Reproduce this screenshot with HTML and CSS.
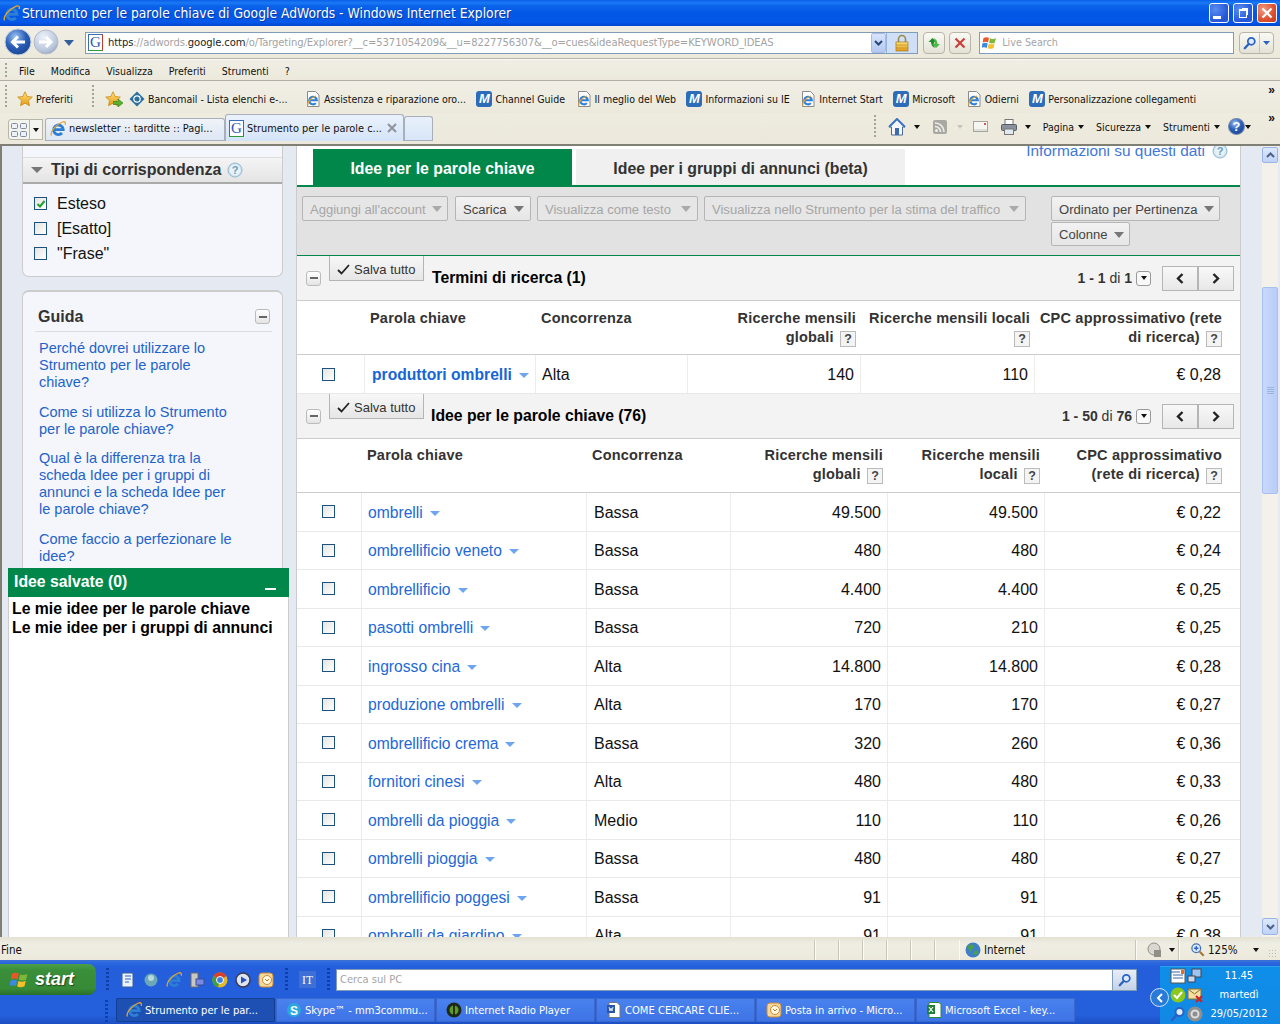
FILE: index.html
```html
<!DOCTYPE html>
<html lang="it">
<head>
<meta charset="utf-8">
<title>Strumento per le parole chiave di Google AdWords - Windows Internet Explorer</title>
<link rel="stylesheet" href="styles.css">
</head>
<body>
<svg class="defs" width="0" height="0" aria-hidden="true">
  <defs>
    <linearGradient id="gold" x1="0" y1="0" x2="0" y2="1"><stop offset="0" stop-color="#ffe27a"/><stop offset="1" stop-color="#e39a14"/></linearGradient>
    <radialGradient id="blueball" cx=".4" cy=".3" r=".8"><stop offset="0" stop-color="#9fc4f2"/><stop offset=".5" stop-color="#2a5fb8"/><stop offset="1" stop-color="#173f8c"/></radialGradient>
    <radialGradient id="greyball" cx=".4" cy=".3" r=".8"><stop offset="0" stop-color="#eef3fa"/><stop offset=".7" stop-color="#b9c6dc"/><stop offset="1" stop-color="#8c9cb8"/></radialGradient>
    <symbol id="ie" viewBox="0 0 16 16">
      <path d="M4 8.600h9.200a4.800 4.800 0 1 0-1.200 3.400" fill="none" stroke="#2d7fd6" stroke-width="2.800"/>
      <path d="M1.500 14.500C-.5 11 6 3.500 12.500 1c2.500-.8 3.500.8 2.600 2.800" fill="none" stroke="#e8a52c" stroke-width="1.300"/>
    </symbol>
    <symbol id="iepage" viewBox="0 0 16 16">
      <path d="M2.500.5h8l3.500 3.500v11.500h-11.500z" fill="#fbfbfb" stroke="#8a8a8a"/>
      <path d="M4.800 9.300h7a3.800 3.800 0 1 0-1 2.800" fill="none" stroke="#2d7fd6" stroke-width="2.100"/>
      <path d="M3 14.500c-1-3 3-8 8-9.500" fill="none" stroke="#e8a52c" stroke-width="1.100"/>
    </symbol>
    <symbol id="star" viewBox="0 0 16 16">
      <path d="M8 .8l2.200 4.700 5.100.6-3.800 3.500 1 5.100L8 12.200l-4.500 2.500 1-5.100L.7 6.100l5.100-.6z" fill="url(#gold)" stroke="#c98a1a" stroke-width=".8"/>
    </symbol>
    <symbol id="flag" viewBox="0 0 16 16">
      <path d="M1.500 3c2-1.200 3.800-1 5.500 0l-1 4.500C4.300 6.600 2.500 6.500.6 7.500z" fill="#e8562a"/>
      <path d="M8 3.300c1.700 1 3.700 1 5.900-.2l-1 4.500c-2 1.100-3.900 1.100-5.800.2z" fill="#7db83a"/>
      <path d="M.4 8.500c1.900-1 3.600-.9 5.300 0l-1 4.500C3 12.100 1.300 12 -.5 13z" fill="#3a8ae0"/>
      <path d="M6.700 8.700c1.900.9 3.800.9 5.900-.2l-1 4.500c-2 1.100-3.900 1.100-5.900.2z" fill="#f5c02a"/>
    </symbol>
    <symbol id="magnifier" viewBox="0 0 16 16">
      <circle cx="9.500" cy="6" r="4" fill="#dcebff" stroke="#2a62c4" stroke-width="2"/>
      <path d="M6.500 9.200L2 14" stroke="#2a62c4" stroke-width="2.600" stroke-linecap="round"/>
    </symbol>
    <symbol id="bighelp" viewBox="0 0 16 16">
      <circle cx="8" cy="8" r="7" fill="#cfe3ee" stroke="#8fb8d2"/>
      <circle cx="8" cy="8" r="5.400" fill="#e8f2f7"/>
      <text x="8" y="12" text-anchor="middle" class="svg-help">?</text>
    </symbol>
  </defs>
</svg>

<div class="window">
  <header class="titlebar">
    <svg class="title-ico"><use href="#ie"/></svg>
    <span class="title-text">Strumento per le parole chiave di Google AdWords - Windows Internet Explorer</span>
    <div class="winbtns">
      <span class="winbtn"><i class="w-min"></i></span>
      <span class="winbtn"><i class="w-max"></i></span>
      <span class="winbtn winclose"><svg viewBox="0 0 12 12" width="12" height="12"><path d="M1.500 1.500l9 9m0-9l-9 9" stroke="#fff" stroke-width="2.200"/></svg></span>
    </div>
  </header>

  <div class="navbar">
    <svg class="navball" viewBox="0 0 28 28" width="28" height="28"><circle cx="14" cy="14" r="13" fill="url(#blueball)" stroke="#c5d0de"/><path d="M21 14H9m5-5.500L8.500 14l5.500 5.500" fill="none" stroke="#fff" stroke-width="3"/></svg>
    <svg class="navball fwd" viewBox="0 0 26 26" width="26" height="26"><circle cx="13" cy="13" r="12" fill="url(#greyball)" stroke="#b4bccb"/><path d="M6 13h12m-5-5l5 5-5 5" fill="none" stroke="#fff" stroke-width="3"/></svg>
    <svg class="navdrop" viewBox="0 0 10 6" width="10" height="6"><path d="M0 0h10L5 6z" fill="#33609c"/></svg>
    <div class="addr">
      <span class="gicon"><span>G</span></span>
      <span class="url">https<span class="dim">://adwords.</span>google.com<span class="dim">/o/Targeting/Explorer?__c=5371054209&amp;__u=8227756307&amp;__o=cues&amp;ideaRequestType=KEYWORD_IDEAS</span></span>
      <span class="addr-drop"><svg viewBox="0 0 9 6" width="9" height="6"><path d="M1 1l3.500 3.500L8 1" fill="none" stroke="#26477c" stroke-width="2"/></svg></span>
      <span class="addr-lock"><svg viewBox="0 0 14 18" width="14" height="18"><path d="M3.500 8V5a3.500 3.500 0 0 1 7 0v3" fill="none" stroke="#9a8a50" stroke-width="1.600"/><rect x="1" y="8" width="12" height="9" fill="url(#gold)" stroke="#a07820" stroke-width=".7"/><path d="M1 11h12M1 14h12" stroke="#b98a24" stroke-width=".7"/></svg></span>
    </div>
    <span class="navbtn"><svg viewBox="0 0 14 14" width="14" height="14"><path d="M5.500 2L1.500 6h2.500c0 3 1.500 5 4 6-1-1.500-1.500-3.500-1-6h2.500z" fill="#1f8a2c"/><path d="M9 12l4-4h-2.500c0-3-1.500-5-4-6 1 1.500 1.500 3.500 1 6H5z" fill="#4cb848"/></svg></span>
    <span class="navbtn stop"><svg viewBox="0 0 12 12" width="12" height="12"><path d="M1.500 1.500l9 9m0-9l-9 9" stroke="#c8403a" stroke-width="2.200"/></svg></span>
    <div class="search">
      <svg class="ico16"><use href="#flag"/></svg>
      <span class="search-text">Live Search</span>
    </div>
    <span class="searchbtn"><span class="searchgo"><svg class="ico14"><use href="#magnifier"/></svg></span><span class="searchmore"><svg viewBox="0 0 7 4" width="7" height="4"><path d="M0 0h7L3.500 4z" fill="#2a62c4"/></svg></span></span>
  </div>

  <nav class="menubar">
    <span class="grip"></span>
    <span>File</span><span>Modifica</span><span>Visualizza</span><span>Preferiti</span><span>Strumenti</span><span>?</span>
  </nav>

  <div class="favbar">
    <span class="grip"></span>
    <span class="fav fav-main"><svg class="ico16"><use href="#star"/></svg>Preferiti</span>
    <span class="grip grip-mid"></span>
    <span class="fav-add"><svg class="ico16"><use href="#star"/></svg><svg class="fav-arrow" viewBox="0 0 10 8" width="10" height="8"><path d="M0 2.500h5V0l5 4-5 4V5.500H0z" fill="#5bb02c" stroke="#2f7a18" stroke-width=".6"/></svg></span>
    <span class="fav"><svg class="ico16" viewBox="0 0 16 16"><path d="M8 .5L15.500 8 8 15.500.5 8z" fill="#2b6f9c"/><circle cx="8" cy="8" r="3.200" fill="none" stroke="#fff" stroke-width="1.200"/></svg>Bancomail - Lista elenchi e-...</span>
    <span class="fav fav-gap"><svg class="ico16"><use href="#iepage"/></svg>Assistenza e riparazione oro...</span>
    <span class="fav"><span class="mlogo">M</span>Channel Guide</span>
    <span class="fav"><svg class="ico16"><use href="#iepage"/></svg>Il meglio del Web</span>
    <span class="fav"><span class="mlogo">M</span>Informazioni su IE</span>
    <span class="fav"><svg class="ico16"><use href="#iepage"/></svg>Internet Start</span>
    <span class="fav"><span class="mlogo">M</span>Microsoft</span>
    <span class="fav"><svg class="ico16"><use href="#iepage"/></svg>Odierni</span>
    <span class="fav"><span class="mlogo">M</span>Personalizzazione collegamenti</span>
    <span class="chev">»</span>
  </div>

  <div class="tabbar">
    <span class="quicktabs"><svg viewBox="0 0 16 14" width="16" height="14"><g fill="#eef2f8" stroke="#7f8aa0"><rect x=".5" y=".5" width="6" height="5" rx="1"/><rect x="9.500" y=".5" width="6" height="5" rx="1"/><rect x=".5" y="8.500" width="6" height="5" rx="1"/><rect x="9.500" y="8.500" width="6" height="5" rx="1"/></g></svg></span>
    <span class="quickdrop"><i class="tri-k"></i></span>
    <span class="tab"><svg class="ico16"><use href="#ie"/></svg><span class="tab-t">newsletter :: tarditte :: Pagi...</span></span>
    <span class="tab tab-on"><span class="gicon"><span>G</span></span><span class="tab-t">Strumento per le parole c...</span><svg class="tab-x" viewBox="0 0 10 10" width="10" height="10"><path d="M1 1l8 8m0-8l-8 8" stroke="#8f939c" stroke-width="2"/></svg></span>
    <span class="tab tab-new"></span>
    <div class="cmdbar">
      <span class="grip"></span>
      <svg class="cmd-home" viewBox="0 0 18 18" width="18" height="18"><path d="M9 1L1 9h2.500v8h11V9H17z" fill="#f5f7fb" stroke="#4a6d9a"/><path d="M1 9l8-8 8 8" fill="none" stroke="#3a74c0" stroke-width="2"/><rect x="7" y="10" width="4" height="7" fill="#3d6ca8"/></svg>
      <i class="tri-k cmd-a"></i>
      <svg class="cmd-feed" viewBox="0 0 14 14" width="14" height="14"><rect width="14" height="14" rx="2" fill="#a9a9a1"/><circle cx="3.500" cy="10.500" r="1.500" fill="#eee"/><path d="M2 6.500a5.500 5.500 0 0 1 5.500 5.500M2 3a9 9 0 0 1 9 9" fill="none" stroke="#eee" stroke-width="1.500"/></svg>
      <i class="tri-g cmd-b"></i>
      <svg class="cmd-mail" viewBox="0 0 15 11" width="15" height="11"><rect x=".5" y=".5" width="14" height="10" fill="#f5f5f2" stroke="#a5a59d"/><path d="M1 9h13" stroke="#c9c9c2"/><rect x="11" y="2" width="2" height="2" fill="#d05a50"/></svg>
      <svg class="cmd-print" viewBox="0 0 16 16" width="16" height="16"><rect x="4" y=".5" width="8" height="5" fill="#fff" stroke="#777"/><rect x=".5" y="5.500" width="15" height="6" rx="1" fill="#8a919c" stroke="#555c66"/><rect x="3.500" y="10" width="9" height="5.500" fill="#dfeaf5" stroke="#777"/></svg>
      <i class="tri-k cmd-c"></i>
      <span class="cmd-t">Pagina</span><i class="tri-k"></i>
      <span class="cmd-t">Sicurezza</span><i class="tri-k"></i>
      <span class="cmd-t">Strumenti</span><i class="tri-k"></i>
      <svg class="cmd-help" viewBox="0 0 16 16" width="16" height="16"><circle cx="8" cy="8" r="7.500" fill="url(#blueball)" stroke="#7c8cad"/><text x="8" y="12" text-anchor="middle" class="svg-q">?</text></svg>
      <i class="tri-k cmd-d"></i>
      <span class="chev chev-cmd">»</span>
    </div>
  </div>

  <div class="content">
    <aside class="side">
      <section class="panel panel-match">
        <h2 class="match-head"><i class="tri-head"></i>Tipi di corrispondenza<svg class="ico16 head-help"><use href="#bighelp"/></svg></h2>
        <ul class="match-list">
          <li><span class="cb cb-on"><svg viewBox="0 0 10 10" width="10" height="10"><path d="M1.500 5l2.500 2.500 4.500-5.500" fill="none" stroke="#22a030" stroke-width="2"/></svg></span>Esteso</li>
          <li><span class="cb"></span>[Esatto]</li>
          <li><span class="cb"></span>"Frase"</li>
        </ul>
      </section>
      <section class="panel panel-help">
        <h2 class="help-head">Guida<span class="collapse"><i></i></span></h2>
        <a class="help-link">Perché dovrei utilizzare lo Strumento per le parole chiave?</a>
        <a class="help-link">Come si utilizza lo Strumento per le parole chiave?</a>
        <a class="help-link">Qual è la differenza tra la scheda Idee per i gruppi di annunci e la scheda Idee per le parole chiave?</a>
        <a class="help-link">Come faccio a perfezionare le idee?</a>
      </section>
      <div class="saved">
        <div class="saved-head">Idee salvate (0)<i class="saved-min"></i></div>
        <div class="saved-body">Le mie idee per le parole chiave<br>Le mie idee per i gruppi di annunci</div>
      </div>
    </aside>

    <main class="main">
      <div class="tabs">
        <span class="mtab mtab-on">Idee per le parole chiave</span>
        <span class="mtab mtab-off">Idee per i gruppi di annunci (beta)</span>
        <a class="info">Informazioni su questi dati<svg class="ico16"><use href="#bighelp"/></svg></a>
      </div>
      <div class="toolbar">
        <div class="tools-left">
          <span class="tbtn off">Aggiungi all'account<i></i></span>
          <span class="tbtn">Scarica<i></i></span>
          <span class="tbtn off">Visualizza come testo<i></i></span>
          <span class="tbtn off">Visualizza nello Strumento per la stima del traffico<i></i></span>
        </div>
        <div class="tools-right">
          <span class="tbtn">Ordinato per Pertinenza<i></i></span>
          <span class="tbtn tbtn-small">Colonne<i></i></span>
        </div>
      </div>

      <div class="sechead">
        <span class="collapse"><i></i></span>
        <span class="saveall"><svg viewBox="0 0 13 11" width="13" height="11"><path d="M1 6l3.500 3.500L12 1" fill="none" stroke="#222" stroke-width="1.800"/></svg>Salva tutto</span>
        <h3>Termini di ricerca (1)</h3>
        <div class="pager"><span><b>1 - 1</b> di <b>1</b></span><span class="pagedrop"><i class="tri-k"></i></span><span class="pagebtns"><span><svg viewBox="0 0 8 11" width="8" height="11"><path d="M6.500 1L2 5.500 6.500 10" fill="none" stroke="#222" stroke-width="2.400"/></svg></span><span><svg viewBox="0 0 8 11" width="8" height="11"><path d="M1.500 1L6 5.500 1.500 10" fill="none" stroke="#222" stroke-width="2.400"/></svg></span></span></div>
      </div>
      <div class="kw kw-a">
        <div class="r rh">
          <div></div><div class="hc">Parola chiave</div><div class="hc">Concorrenza</div>
          <div class="hc num">Ricerche mensili globali <span class="q">?</span></div>
          <div class="hc num">Ricerche mensili locali <span class="q">?</span></div>
          <div class="hc num">CPC approssimativo (rete di ricerca) <span class="q">?</span></div>
        </div>
        <div class="r rd rd-a">
          <div class="cbc"><span class="cb"></span></div><div class="c"><a class="kwl kwl-b">produttori ombrelli</a><i class="kwa"></i></div><div class="c">Alta</div><div class="c n">140</div><div class="c n">110</div><div class="c n">€ 0,28</div>
        </div>
      </div>

      <div class="sechead sechead-b">
        <span class="collapse"><i></i></span>
        <span class="saveall"><svg viewBox="0 0 13 11" width="13" height="11"><path d="M1 6l3.500 3.500L12 1" fill="none" stroke="#222" stroke-width="1.800"/></svg>Salva tutto</span>
        <h3>Idee per le parole chiave (76)</h3>
        <div class="pager"><span><b>1 - 50</b> di <b>76</b></span><span class="pagedrop"><i class="tri-k"></i></span><span class="pagebtns"><span><svg viewBox="0 0 8 11" width="8" height="11"><path d="M6.500 1L2 5.500 6.500 10" fill="none" stroke="#222" stroke-width="2.400"/></svg></span><span><svg viewBox="0 0 8 11" width="8" height="11"><path d="M1.500 1L6 5.500 1.500 10" fill="none" stroke="#222" stroke-width="2.400"/></svg></span></span></div>
      </div>
      <div class="kw kw-b">
        <div class="r rh">
          <div></div><div class="hc">Parola chiave</div><div class="hc">Concorrenza</div>
          <div class="hc num">Ricerche mensili globali <span class="q">?</span></div>
          <div class="hc num">Ricerche mensili locali <span class="q">?</span></div>
          <div class="hc num">CPC approssimativo (rete di ricerca) <span class="q">?</span></div>
        </div>
        <div class="r rd"><div class="cbc"><span class="cb"></span></div><div class="c"><a class="kwl">ombrelli</a><i class="kwa"></i></div><div class="c">Bassa</div><div class="c n">49.500</div><div class="c n">49.500</div><div class="c n">€ 0,22</div></div>
        <div class="r rd"><div class="cbc"><span class="cb"></span></div><div class="c"><a class="kwl">ombrellificio veneto</a><i class="kwa"></i></div><div class="c">Bassa</div><div class="c n">480</div><div class="c n">480</div><div class="c n">€ 0,24</div></div>
        <div class="r rd"><div class="cbc"><span class="cb"></span></div><div class="c"><a class="kwl">ombrellificio</a><i class="kwa"></i></div><div class="c">Bassa</div><div class="c n">4.400</div><div class="c n">4.400</div><div class="c n">€ 0,25</div></div>
        <div class="r rd"><div class="cbc"><span class="cb"></span></div><div class="c"><a class="kwl">pasotti ombrelli</a><i class="kwa"></i></div><div class="c">Bassa</div><div class="c n">720</div><div class="c n">210</div><div class="c n">€ 0,25</div></div>
        <div class="r rd"><div class="cbc"><span class="cb"></span></div><div class="c"><a class="kwl">ingrosso cina</a><i class="kwa"></i></div><div class="c">Alta</div><div class="c n">14.800</div><div class="c n">14.800</div><div class="c n">€ 0,28</div></div>
        <div class="r rd"><div class="cbc"><span class="cb"></span></div><div class="c"><a class="kwl">produzione ombrelli</a><i class="kwa"></i></div><div class="c">Alta</div><div class="c n">170</div><div class="c n">170</div><div class="c n">€ 0,27</div></div>
        <div class="r rd"><div class="cbc"><span class="cb"></span></div><div class="c"><a class="kwl">ombrellificio crema</a><i class="kwa"></i></div><div class="c">Bassa</div><div class="c n">320</div><div class="c n">260</div><div class="c n">€ 0,36</div></div>
        <div class="r rd"><div class="cbc"><span class="cb"></span></div><div class="c"><a class="kwl">fornitori cinesi</a><i class="kwa"></i></div><div class="c">Alta</div><div class="c n">480</div><div class="c n">480</div><div class="c n">€ 0,33</div></div>
        <div class="r rd"><div class="cbc"><span class="cb"></span></div><div class="c"><a class="kwl">ombrelli da pioggia</a><i class="kwa"></i></div><div class="c">Medio</div><div class="c n">110</div><div class="c n">110</div><div class="c n">€ 0,26</div></div>
        <div class="r rd"><div class="cbc"><span class="cb"></span></div><div class="c"><a class="kwl">ombrelli pioggia</a><i class="kwa"></i></div><div class="c">Bassa</div><div class="c n">480</div><div class="c n">480</div><div class="c n">€ 0,27</div></div>
        <div class="r rd"><div class="cbc"><span class="cb"></span></div><div class="c"><a class="kwl">ombrellificio poggesi</a><i class="kwa"></i></div><div class="c">Bassa</div><div class="c n">91</div><div class="c n">91</div><div class="c n">€ 0,25</div></div>
        <div class="r rd"><div class="cbc"><span class="cb"></span></div><div class="c"><a class="kwl">ombrelli da giardino</a><i class="kwa"></i></div><div class="c">Alta</div><div class="c n">91</div><div class="c n">91</div><div class="c n">€ 0,38</div></div>
      </div>
    </main>
    <div class="gutter"></div>
    <div class="scrollbar">
      <span class="sb-btn"><svg viewBox="0 0 9 6" width="9" height="6"><path d="M1 5l3.500-3.500L8 5" fill="none" stroke="#4d6185" stroke-width="2"/></svg></span>
      <span class="sb-thumb"><i></i></span>
      <span class="sb-btn sb-down"><svg viewBox="0 0 9 6" width="9" height="6"><path d="M1 1l3.500 3.500L8 1" fill="none" stroke="#4d6185" stroke-width="2"/></svg></span>
    </div>
  </div>

  <footer class="status">
    <span class="st-text">Fine</span>
    <div class="st-cells"><i></i><i></i><i></i><i></i><i></i><i></i></div>
    <span class="st-zone"><svg class="ico16" viewBox="0 0 16 16"><circle cx="8" cy="8" r="7.500" fill="#3d7fc8"/><path d="M3 4c2-2 5-2 6 0s-2 2-2 4-2 2-3 0-2-2-1-4zm7 5c2-1 4 0 3 2s-3 3-4 1 0-2 1-3z" fill="#4aa04a"/></svg>Internet</span>
    <span class="st-lock"><svg viewBox="0 0 18 16" width="18" height="16"><circle cx="8" cy="7" r="6" fill="#d8d8d0" stroke="#8f8f88"/><rect x="8" y="8" width="7" height="7" fill="#8f8f88"/></svg><i class="tri-k"></i></span>
    <span class="st-zoom"><svg class="ico14" viewBox="0 0 16 16"><circle cx="6" cy="6" r="5" fill="#dcebff" stroke="#4a72b0" stroke-width="1.500"/><path d="M6 3.500v5M3.500 6h5" stroke="#2a62c4" stroke-width="1.500"/><path d="M10 10l4.500 4.500" stroke="#a8752c" stroke-width="2.400"/></svg>125%<i class="tri-k"></i></span>
    <span class="st-grip"></span>
  </footer>

  <div class="taskbar">
    <div class="task-main">
      <div class="task-top">
        <span class="start"><svg class="start-flag" viewBox="0 0 16 16" width="20" height="20"><use href="#flag"/></svg>start</span>
        <span class="dots"></span>
        <div class="quick">
          <svg class="ico16" viewBox="0 0 16 16"><rect x="2" y="1" width="11" height="14" rx="1" fill="#eaf2fc" stroke="#3b5f9a"/><path d="M5 4h6M5 7h6M5 10h4" stroke="#2a62c4"/></svg>
          <svg class="ico16" viewBox="0 0 16 16"><circle cx="8" cy="8" r="6.500" fill="#6aa8b8"/><circle cx="8" cy="6" r="3" fill="#b7d8de"/></svg>
          <svg class="ico16"><use href="#ie"/></svg>
          <svg class="ico16" viewBox="0 0 16 16"><rect x="2" y="1" width="7" height="14" fill="#c8c8c0" stroke="#6a6a6a"/><rect x="7" y="7" width="8" height="6" fill="#7a8ae0" stroke="#3a4a9a"/></svg>
          <svg class="ico16" viewBox="0 0 16 16"><circle cx="8" cy="8" r="7.500" fill="#e3b82a"/><path d="M8 8L1.500 4A7.500 7.500 0 0 1 14.500 4z" fill="#d8402c"/><path d="M8 8L1.500 4A7.500 7.500 0 0 0 6 15.300z" fill="#3f9f3f"/><circle cx="8" cy="8" r="3.500" fill="#3f7fdc" stroke="#fff"/></svg>
          <svg class="ico16" viewBox="0 0 16 16"><circle cx="8" cy="8" r="7" fill="#dfe5ef" stroke="#3a3a58" stroke-width="1.500"/><path d="M6 4.500l6 3.500-6 3.500z" fill="#2a4fb8"/></svg>
          <svg class="ico16" viewBox="0 0 16 16"><rect x="1" y="1" width="14" height="14" rx="3" fill="#f5d79a" stroke="#c98a3a"/><circle cx="9" cy="8" r="4.500" fill="#fff6de" stroke="#c98a3a"/><path d="M7 7l2 2 2-2" fill="none" stroke="#c07a20"/></svg>
        </div>
        <span class="dots dots-b"></span>
        <span class="lang">IT</span>
        <span class="dots dots-c"></span>
        <div class="desk-search"><span>Cerca sul PC</span></div>
        <span class="desk-go"><svg class="ico14"><use href="#magnifier"/></svg></span>
      </div>
      <div class="task-bottom">
        <span class="dots"></span>
        <span class="tbt tbt-on"><svg class="ico16"><use href="#ie"/></svg>Strumento per le par...</span>
        <span class="tbt"><svg class="ico16" viewBox="0 0 16 16"><circle cx="8" cy="8" r="7" fill="#29a8e0"/><text x="8" y="12.500" text-anchor="middle" class="svg-s">S</text></svg>Skype™ - mm3commu...</span>
        <span class="tbt"><svg class="ico16" viewBox="0 0 16 16"><circle cx="8" cy="8" r="7.500" fill="#1c2a1c"/><circle cx="8" cy="8" r="4.500" fill="#5f9a2a"/><path d="M8 3v10" stroke="#111" stroke-width="1.500"/></svg>Internet Radio Player</span>
        <span class="tbt"><svg class="ico16" viewBox="0 0 16 16"><path d="M3 .5h8l3 3v12H3z" fill="#fff" stroke="#777"/><rect x="1" y="3" width="8" height="8" fill="#2a56a8"/><path d="M3 5l1 4 1-3 1 3 1-4" fill="none" stroke="#fff" stroke-width=".8"/></svg>COME CERCARE CLIE...</span>
        <span class="tbt"><svg class="ico16" viewBox="0 0 16 16"><rect x="1" y="1" width="14" height="14" rx="3" fill="#f5d79a" stroke="#c98a3a"/><circle cx="9" cy="8" r="4.500" fill="#fff6de" stroke="#c98a3a"/><path d="M7 7l2 2 2-2" fill="none" stroke="#c07a20"/></svg>Posta in arrivo - Micro...</span>
        <span class="tbt"><svg class="ico16" viewBox="0 0 16 16"><path d="M3 .5h10l2 2v13H3z" fill="#fff" stroke="#2a8a3a"/><rect x="1" y="3" width="8" height="9" fill="#1f7f3a"/><path d="M3 5l4 5m0-5l-4 5" stroke="#fff" stroke-width="1.200"/></svg>Microsoft Excel - key...</span>
      </div>
    </div>
    <div class="tray">
      <span class="tray-chev"><svg viewBox="0 0 8 10" width="8" height="10"><path d="M6 1L2 5l4 4" fill="none" stroke="#fff" stroke-width="2"/></svg></span>
      <div class="tray-icons">
        <svg class="ico16" viewBox="0 0 16 16"><rect x="1" y="1" width="14" height="14" fill="#fff" stroke="#555"/><path d="M1 4h9M3 7h10M3 10h10" stroke="#3a62a8"/><rect x="11" y="2" width="3" height="4" fill="#d8702c"/></svg>
        <svg class="ico16" viewBox="0 0 16 16"><rect x="5" y="1" width="9" height="8" fill="#9ec4f0" stroke="#445"/><rect x="1" y="8" width="7" height="6" fill="#c8d8f0" stroke="#445"/></svg>
        <svg class="ico16" viewBox="0 0 16 16"><circle cx="8" cy="8" r="7.500" fill="#8ac81e"/><path d="M4 8l3 3 5-6" fill="none" stroke="#fff" stroke-width="2"/></svg>
        <svg class="ico16" viewBox="0 0 16 16"><rect x="1" y="2" width="13" height="10" fill="#f3dfa0" stroke="#8a7030"/><path d="M1 2l6.500 5L14 2" fill="none" stroke="#8a7030"/><path d="M9 9l6 6m0-6l-6 6" stroke="#d02020" stroke-width="2"/></svg>
        <svg class="ico16"><use href="#magnifier"/></svg>
        <svg class="ico16" viewBox="0 0 16 16"><circle cx="8" cy="8" r="7.500" fill="#8f8f8f"/><circle cx="8" cy="8" r="3.500" fill="none" stroke="#ddd" stroke-width="2"/></svg>
      </div>
      <div class="clock"><span>11.45</span><span>martedì</span><span>29/05/2012</span></div>
    </div>
  </div>
</div>
</body>
</html>
```
FILE: styles.css
```css
* { box-sizing: border-box; }
html, body { margin: 0; padding: 0; }
body { width: 1280px; height: 1024px; overflow: hidden; font-family: "Liberation Sans", Arial, sans-serif; background: #ece9d8; }
.defs { position: absolute; }
h2, h3, ul { margin: 0; padding: 0; list-style: none; }
i { display: inline-block; font-style: normal; }
svg { display: block; flex: none; }
.ico16 { width: 16px; height: 16px; }
.ico14 { width: 14px; height: 14px; }
.svg-help { font: bold 11px "Liberation Sans", sans-serif; fill: #6a9cc0; }
.svg-q { font: bold 12px "Liberation Sans", sans-serif; fill: #fff; }
.svg-s { font: bold 12px "Liberation Sans", sans-serif; fill: #fff; }

.window { width: 1280px; height: 1024px; display: flex; flex-direction: column; }

/* title bar */
.titlebar { height: 26px; flex: none; display: flex; align-items: center; padding: 0 3px 0 3px; color: #fff; background: linear-gradient(#0a5fe8 0, #1a7af5 3px, #0a62ea 6px, #0356e4 14px, #0459ea 22px, #0247cc 26px); }
.title-ico { width: 17px; height: 17px; margin-right: 2px; }
.title-text { font: 500 13.750px "DejaVu Sans Condensed", "Noto Sans", sans-serif; text-shadow: 1px 1px 0 #0a3aa8; white-space: nowrap; }
.winbtns { margin-left: auto; display: flex; gap: 4px; }
.winbtn { width: 20px; height: 20px; border: 1px solid #fff; border-radius: 3px; background: radial-gradient(circle at 30% 30%, #5a8cf0, #2456d8 70%, #2a5ad8); display: flex; align-items: center; justify-content: center; position: relative; }
.winclose { background: radial-gradient(circle at 30% 30%, #f09a80, #dc5030 60%, #c43a1c); }
.w-min { width: 8px; height: 3px; background: #fff; margin-top: 9px; margin-right: 4px; }
.w-max { width: 8px; height: 9px; border: 1px solid #fff; border-top-width: 2px; box-shadow: 2px -2px 0 -1px #fff; }

/* navigation */
.navbar { height: 33px; flex: none; display: flex; align-items: center; padding: 1px 6px 0 4px; background: linear-gradient(#f0eee4, #ece9dc); border-bottom: 1px solid #b8b6a8; }
.navball { margin-top: -2px; }
.navball.fwd { margin-left: 1px; }
.navdrop { margin: 0 11px 0 5px; }
.addr { width: 834px; height: 22px; display: flex; align-items: center; background: #fff; border: 1px solid #7f9db9; }
.gicon { width: 15px; height: 17px; flex: none; background: #fff; border: 1px solid #3a6fb5; border-right-color: #c43a2c; border-bottom-color: #2f9a38; display: flex; align-items: center; justify-content: center; }
.gicon span { font: 15px "Liberation Serif", serif; color: #2a56b8; line-height: 15px; }
.addr > .gicon { margin-left: 2px; }
.url { font: 11.150px "DejaVu Sans Condensed", sans-serif; margin-left: 5px; flex: 1; white-space: nowrap; overflow: hidden; letter-spacing: -.1px; color: #222; }
.dim { color: #a3a3a3; }
.addr-drop { width: 15px; height: 20px; flex: none; display: flex; align-items: center; justify-content: center; background: linear-gradient(#d8e4fb, #b4c8f0); border: 1px solid #a7bde6; border-radius: 2px; }
.addr-lock { width: 31px; height: 20px; flex: none; display: flex; align-items: center; justify-content: center; background: #cfdff5; border-left: 1px solid #96b3dd; }
.navbtn { width: 22px; height: 22px; flex: none; margin-left: 4px; display: flex; align-items: center; justify-content: center; border: 1px solid #b7b5a8; border-radius: 4px; background: linear-gradient(#fafaf6, #e4e2d6); }
.navbtn:first-of-type { margin-left: 5px; }
.search { width: 255px; height: 22px; margin-left: 8px; display: flex; align-items: center; gap: 4px; padding-left: 2px; background: #fff; border: 1px solid #7f9db9; }
.search-text { font: 10.700px "DejaVu Sans Condensed", sans-serif; color: #a5a5a5; }
.searchbtn { margin-left: 5px; width: 35px; height: 22px; display: flex; border: 1px solid #b7b5a8; border-radius: 4px; background: linear-gradient(#fafaf6, #e4e2d6); }
.searchgo { width: 20px; display: flex; align-items: center; justify-content: center; border-right: 1px solid #c8c6ba; }
.searchmore { flex: 1; display: flex; align-items: center; justify-content: center; }

/* menu + favourites */
.menubar { height: 22px; flex: none; display: flex; align-items: center; gap: 16px; padding: 1px 0 0 5px; font: 10.500px "DejaVu Sans Condensed", sans-serif; color: #111; background: linear-gradient(#f0eee4, #ece9dc); border-top: 1px solid #fbfaf5; border-bottom: 1px solid #b0aea2; white-space: nowrap; }
.menubar .grip { margin-right: -4px; }
.grip { width: 2px; height: 16px; flex: none; background: repeating-linear-gradient(#a5a398 0 2px, transparent 2px 4px); }
.favbar { height: 32px; flex: none; display: flex; align-items: center; padding: 3px 0 0 5px; font: 10.500px "DejaVu Sans Condensed", sans-serif; color: #111; background: linear-gradient(#f1efe6, #ece9dc); position: relative; white-space: nowrap; }
.favbar .grip { height: 24px; margin-top: -3px; }
.fav { display: flex; align-items: center; gap: 3px; margin-right: 10.500px; }
.fav-main { margin-left: 10px; gap: 3px; margin-right: 19px; }
.grip-mid { margin-right: 11px; }
.fav-add { position: relative; width: 16px; height: 16px; margin-right: 8px; }
.fav-arrow { position: absolute; right: -2px; bottom: 0; }
.fav-gap { margin-left: 7px; }
.mlogo { width: 16px; height: 16px; flex: none; border-radius: 3px; background: #2d6cb8; color: #fff; font: italic bold 13px/16px "Liberation Sans", sans-serif; text-align: center; }
.chev { position: absolute; right: 5px; top: 2px; font: bold 12px "Liberation Sans", sans-serif; color: #111; }

/* tabs */
.tabbar { height: 31px; flex: none; display: flex; align-items: flex-end; padding: 0 0 3px 8px; font: 10.900px "DejaVu Sans Condensed", sans-serif; color: #111; background: linear-gradient(#eeebdf, #ece9dc); position: relative; white-space: nowrap; box-shadow: inset 0 -3px 0 #ece9dc; }
.quicktabs { width: 22px; height: 21px; margin-bottom: 1px; display: flex; align-items: center; justify-content: center; border: 1px solid #b7b5a8; border-radius: 3px 0 0 3px; background: #f4f4ee; }
.quickdrop { width: 13px; height: 21px; margin-bottom: 1px; display: flex; align-items: center; justify-content: center; border: 1px solid #b7b5a8; border-left: 0; background: #f4f4ee; margin-right: 2px; }
.tri-k { width: 0; height: 0; border: 3px solid transparent; border-top: 4px solid #111; border-bottom: 0; flex: none; }
.tri-g { width: 0; height: 0; border: 3px solid transparent; border-top: 4px solid #c8c6ba; border-bottom: 0; flex: none; }
.tab { width: 180px; height: 23px; display: flex; align-items: center; gap: 3px; padding: 0 0 2px 4px; background: linear-gradient(#f0f3f8, #dde6f4); border: 1px solid #a8aebb; border-bottom: 1px solid #a6b0c0; border-radius: 3px 3px 0 0; }
.tab-on { width: 179px; height: 27px; background: linear-gradient(#eaf2fc, #d4e4f8); padding: 0 0 0 3px; border-bottom: 0; }
.tab-t { flex: none; }
.tab-x { margin-left: 2px; }
.tab-new { width: 29px; height: 25px; margin-left: 0; background: linear-gradient(#e8f0fa, #d8e6f8); }
.cmdbar { position: absolute; right: 0; top: 0; bottom: 0; display: flex; align-items: center; padding: 0 29px 4px 0; font-size: 10.500px; }
.cmdbar .grip { height: 24px; margin-right: 12px; }
.cmd-a { margin: 0 13px 0 8px; }
.cmd-b { margin: 0 10px; }
.cmd-print { margin-left: 13px; }
.cmd-c { margin: 0 12px 0 8px; }
.cmd-t { margin-right: 4px; }
.cmd-t + .tri-k { margin-right: 12px; }
.cmd-help { width: 17px; height: 17px; margin-left: -4px; }
.cmd-d { margin-left: 0; }
.chev-cmd { top: -2px; }

/* content */
.content { height: 793px; flex: none; display: flex; border-top: 2px solid #807f74; background: #e6e9f2; position: relative; overflow: hidden; }
.side { width: 296px; flex: none; padding: 0 13px 0 20px; border-left: 2px solid #807f74; background: #e5e9f2; }
.panel { width: 261px; background: #f4f6fb; border: 1px solid #ccc; }
.panel-match { height: 131px; border-top: 0; border-radius: 0 0 7px 7px; padding-top: 11px; }
.match-head { height: 27px; display: flex; align-items: center; padding: 0 0 0 8px; font-size: 16px; font-weight: bold; color: #333; background: linear-gradient(#f4f4f4, #e4e4e4); border-top: 1px solid #ddd; border-bottom: 2px solid #aaa; }
.tri-head { width: 0; height: 0; border: 6px solid transparent; border-top: 6px solid #777; border-bottom: 0; margin-right: 8px; }
.head-help { margin-left: 6px; }
.match-list { padding: 7px 0 0 11px; }
.match-list li { height: 25px; display: flex; align-items: center; font-size: 16px; color: #111; }
.cb { width: 13px; height: 13px; flex: none; display: flex; align-items: center; justify-content: center; border: 1px solid #1c5180; background: linear-gradient(135deg, #e4e4e0, #fff); }
.match-list .cb { margin-right: 10px; }
.panel-help { height: 400px; margin-top: 13px; border-top: 2px solid #ccc; border-radius: 7px 7px 0 0; padding: 0 10px 0 12px; }
.help-head { height: 40px; margin-top: 0; padding: 16px 0 0 3px; display: flex; justify-content: space-between; align-items: flex-start; font-size: 16px; font-weight: bold; color: #333; border-bottom: 1px solid #ddd; margin-bottom: 8px; }
.collapse { width: 15px; height: 15px; flex: none; display: flex; align-items: center; justify-content: center; border: 1px solid #bbb; border-radius: 3px; background: linear-gradient(#fff, #e4e4e4); }
.collapse i { width: 8px; height: 2px; background: #666; }
.help-head .collapse { margin: 1px 2px 0 0; }
.help-link { display: block; margin: 0 0 12.700px 4px; width: 195px; font-size: 14.500px; line-height: 17px; color: #1f63c9; }
.saved { position: absolute; left: 8px; top: 422px; bottom: 0; width: 281px; background: #fff; border-left: 1px solid #ccc; border-right: 1px solid #ccc; }
.saved-head { height: 29px; margin: 0 -1px; padding: 0 6px 2px; display: flex; align-items: center; position: relative; background: #02874a; color: #fff; font-size: 15.800px; font-weight: bold; }
.saved-min { position: absolute; right: 13px; bottom: 7px; width: 11px; height: 2px; background: #fff; }
.saved-body { padding: 2px 3px; font-size: 15.800px; line-height: 19px; font-weight: bold; color: #000; }

/* main */
.main { width: 945px; flex: none; background: #fff; border-left: 1px solid #ccc; border-right: 1px solid #ccc; }
.tabs { height: 41px; display: flex; align-items: flex-end; padding-left: 16px; border-bottom: 2px solid #02874a; position: relative; }
.mtab { height: 36px; display: flex; align-items: center; justify-content: center; padding-top: 4px; font-size: 15.850px; font-weight: bold; }
.mtab-on { width: 259px; background: #02874a; color: #fff; margin-right: 4px; }
.mtab-off { width: 329px; background: #f0f0f0; color: #333; }
.info { position: absolute; right: 12px; top: -4px; display: flex; align-items: center; gap: 7px; font-size: 15.400px; color: #3f78d8; white-space: nowrap; }
.toolbar { height: 69px; padding: 9px 20px 0 5px; display: flex; justify-content: space-between; background: #e2e2e2; border-bottom: 1px solid #02874a; }
.tools-left { display: flex; gap: 6px; align-items: flex-start; }
.tools-left .tbtn:nth-child(1) { width: 146px; margin-right: 1px; }
.tools-left .tbtn:nth-child(2) { width: 76px; }
.tools-left .tbtn:nth-child(3) { width: 161px; }
.tools-left .tbtn:nth-child(4) { width: 322px; }
.tools-right { display: flex; flex-direction: column; align-items: flex-start; gap: 1px; }
.tools-right .tbtn { width: 169px; }
.tools-right .tbtn-small { width: 79px; }
.tbtn { height: 25px; display: flex; align-items: center; justify-content: space-between; gap: 6px; padding: 1px 6px 0 7px; font-size: 13.050px; color: #444; white-space: nowrap; border: 1px solid #b5b5b5; border-radius: 2px; background: linear-gradient(#f2f2f2, #e6e6e6); }
.tbtn i { width: 0; height: 0; border: 5px solid transparent; border-top: 6px solid #777; border-bottom: 0; }
.tbtn.off { color: #a5a5a5; background: #e6e6e6; }
.tbtn.off i { border-top-color: #aaa; }
.tbtn-small { height: 24px; }
.sechead { height: 45px; display: flex; align-items: center; gap: 8px; padding: 0 6px 0 9px; background: #f3f3f3; border-bottom: 1px solid #ccc; }
.sechead h3 { font-size: 15.750px; font-weight: bold; color: #000; white-space: nowrap; }
.sechead-b { height: 46px; border-top: 1px solid #e8e8e8; }
.sechead-b h3 { margin-left: -1px; }
.saveall { align-self: flex-start; height: 25px; width: 95px; display: flex; align-items: center; gap: 4px; padding: 3px 0 0 7px; font-size: 13px; color: #333; border: 1px solid #b5b5b5; border-top: 0; background: linear-gradient(#f7f7f7, #e6e6e6); }
.pager { margin-left: auto; display: flex; align-items: center; font-size: 14px; color: #333; }
.pagedrop { width: 15px; height: 15px; margin: 0 11px 0 4px; display: flex; align-items: center; justify-content: center; border: 1px solid #999; border-radius: 3px; background: #f8f8f8; }
.pagebtns { display: flex; }
.pagebtns span { width: 36px; height: 25px; display: flex; align-items: center; justify-content: center; border: 1px solid #b5b5b5; background: linear-gradient(#f8f8f8, #e8e8e8); }

/* keyword tables */
.r { display: grid; }
.kw-a .r { grid-template-columns: 67px 171px 152px 173px 174px 206px; }
.kw-b .r { grid-template-columns: 64px 225px 144px 157px 157px 196px; }
.rh { height: 54px; border-bottom: 1px solid #ccc; }
.hc { padding: 8px 5px 0 6px; font-size: 14.500px; line-height: 19px; font-weight: bold; color: #333; letter-spacing: .2px; }
.kw-b .hc { padding-top: 7px; }
.hc.num { text-align: right; padding-right: 4px; }
.hc.num:last-child { padding-right: 18px; padding-left: 0; }
.q { display: inline-block; width: 16px; height: 16px; margin: -2px 0 -2px 2px; border: 1px solid #bbb; background: #f4f4f4; font-size: 12.500px; line-height: 14px; text-align: center; color: #444; letter-spacing: 0; vertical-align: -1px; }
.rd { height: 38.500px; border-bottom: 1px solid #e9e9e9; font-size: 16px; color: #111; }
.rd-a { height: 38px; border-bottom: 0; }
.cbc { display: flex; align-items: center; padding-left: 25px; }
.c { display: flex; align-items: center; padding: 1px 7px 0 7px; border-left: 1px solid #ececec; white-space: nowrap; }
.kw-b .c { padding-top: 2px; }
.kw-b .c:nth-child(2) { padding-left: 6px; }
.kw-a .c:nth-child(3) { padding-left: 6px; }
.n { justify-content: flex-end; padding-right: 6px; }
.c.n:last-child { padding-right: 19px; }
.kwl { color: #2268d6; font-size: 15.650px; }
.kwl-b { font-weight: bold; color: #1766d6; }
.kwa { width: 0; height: 0; margin-left: 7px; border: 5px solid transparent; border-top: 5px solid #6ea5ee; border-bottom: 0; margin-top: 1px; }

/* scrollbar */
.gutter { width: 21px; flex: none; background: #e5e9f2; }
.scrollbar { width: 16px; flex: none; display: flex; flex-direction: column; background: #f3f1ea; }
.sb-btn { height: 16px; flex: none; margin-top: 1px; display: flex; align-items: center; justify-content: center; background: linear-gradient(#dce8fb, #c0d3f8); border: 1px solid #9ab4e8; border-radius: 2px; }
.sb-down { height: 17px; margin-top: 424px; }
.sb-thumb { height: 207px; margin-top: 124px; display: flex; align-items: center; justify-content: center; background: linear-gradient(90deg, #c8d9fa, #b8cdf7); border: 1px solid #a8c0ef; border-radius: 2px; }
.sb-thumb i { width: 7px; height: 7px; background: repeating-linear-gradient(#9ab4e0 0 1px, transparent 1px 2px); }

/* status */
.status { height: 25px; flex: none; display: flex; align-items: center; padding-top: 2px; position: relative; font: 11.500px "DejaVu Sans Condensed", sans-serif; color: #111; background: linear-gradient(#e4e1d2, #efeee4 30%, #ece9dc); border-bottom: 2px solid #3a6fd8; }
.st-text { margin-left: 1px; width: 814px; }
.st-cells { display: flex; }
.st-cells i { width: 24px; height: 20px; border-left: 1px solid #fbfaf5; box-shadow: -1px 0 0 #c8c6ba; }
.st-zone { display: flex; align-items: center; gap: 3px; width: 177px; padding-left: 5px; border-left: 1px solid #fbfaf5; height: 20px; }
.st-lock { display: flex; align-items: center; gap: 5px; width: 43px; height: 20px; padding-left: 9px; border-left: 1px solid #fbfaf5; box-shadow: -1px 0 0 #c8c6ba; }
.st-zoom { display: flex; align-items: center; gap: 3px; padding-left: 11px; height: 20px; border-left: 1px solid #fbfaf5; box-shadow: -1px 0 0 #c8c6ba; }
.st-zoom i { margin-left: 12px; }
.st-grip { position: absolute; right: 2px; bottom: 1px; width: 10px; height: 10px; background: radial-gradient(#bbb 1px, transparent 1px) 0 0/3px 3px; }

/* taskbar */
.taskbar { flex: 1; display: flex; font: 11.100px "DejaVu Sans Condensed", sans-serif; color: #fff; background: linear-gradient(#2a68e0, #245edb 10%, #2560dc 85%, #1c4fc4); white-space: nowrap; }
.task-main { flex: 1; display: flex; flex-direction: column; }
.task-top { height: 35px; display: flex; align-items: center; }
.start { width: 96px; height: 31px; display: flex; align-items: center; gap: 5px; padding-left: 10px; font: italic bold 18px "Liberation Sans", sans-serif; text-shadow: 1px 1px 1px #1a4a1a; border-radius: 0 8px 8px 0; background: linear-gradient(#4d9e4a, #3a8f3a 20%, #378a36 80%, #2a6f2a); }
.dots { width: 3px; height: 24px; flex: none; margin-left: 10px; background: repeating-linear-gradient(#0f3fa8 0 2px, transparent 2px 4px); }
.quick { display: flex; gap: 7px; margin-left: 11px; align-items: center; }
.dots-b { margin-left: 11px; }
.lang { width: 17px; height: 17px; margin-left: 11px; display: flex; align-items: center; justify-content: center; font: 11.500px "Liberation Serif", serif; background: #3f6fd4; }
.dots-c { margin-left: 11px; }
.desk-search { width: 777px; height: 22px; margin-left: 6px; padding-left: 3px; display: flex; align-items: center; background: #fff; border: 1px solid #7f9db9; color: #a5a5a5; }
.desk-go { width: 24px; height: 22px; display: flex; align-items: center; justify-content: center; background: linear-gradient(#e8eef8, #c4d2e8); border: 1px solid #7f9db9; border-left: 0; }
.task-bottom { flex: 1; display: flex; align-items: flex-start; padding-top: 1px; gap: 1px; }
.task-bottom .dots { margin: 2px 7px 0 105px; }
.tbt { width: 159px; height: 24px; display: flex; align-items: center; gap: 3px; padding-left: 10px; border-radius: 2px; background: linear-gradient(#4a82ee, #3d73e6); box-shadow: inset 0 0 0 1px #3a68cc; }
.tbt-on { background: #1e50b4; box-shadow: inset 0 0 0 1px #123f94; }
.tray { width: 120px; flex: none; margin-top: 4px; display: flex; position: relative; padding: 0 0 0 10px; background: linear-gradient(#0e8ee8, #1188e4); border-top: 1px solid #2aa0ec; }
.tray-chev { position: absolute; left: -10px; top: 21px; width: 19px; height: 19px; display: flex; align-items: center; justify-content: center; border: 1px solid #d0e4fa; border-radius: 50%; background: #2a7ad8; }
.tray-icons { width: 36px; display: grid; grid-template-columns: 16px 16px; gap: 3px 1px; align-content: start; margin-top: 1px; }
.clock { flex: 1; display: flex; flex-direction: column; align-items: center; gap: 5px; padding: 2px 8px 0 0; font-size: 11px; line-height: 14px; }
```
